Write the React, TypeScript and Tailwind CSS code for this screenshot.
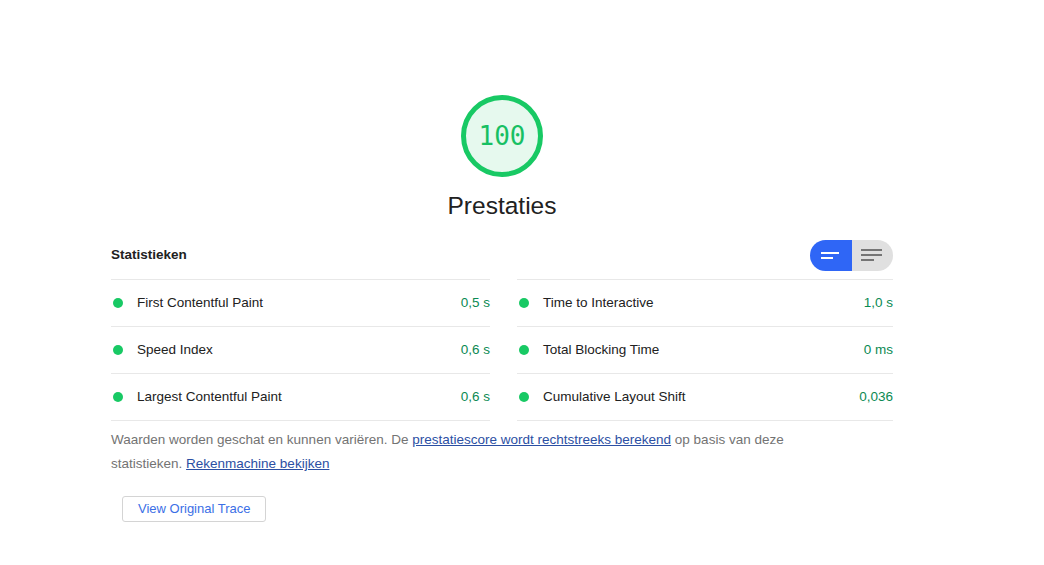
import React from 'react';

type Metric = { label: string; value: string };

const leftMetrics: Metric[] = [
  { label: 'First Contentful Paint', value: '0,5 s' },
  { label: 'Speed Index', value: '0,6 s' },
  { label: 'Largest Contentful Paint', value: '0,6 s' },
];

const rightMetrics: Metric[] = [
  { label: 'Time to Interactive', value: '1,0 s' },
  { label: 'Total Blocking Time', value: '0 ms' },
  { label: 'Cumulative Layout Shift', value: '0,036' },
];

function Gauge() {
  return (
    <div className="relative w-[82px] h-[82px]">
      <svg width="82" height="82" viewBox="0 0 82 82" className="absolute inset-0">
        <circle cx="41" cy="41" r="38.5" fill="#e6f9ee" stroke="#18c964" strokeWidth="5" />
      </svg>
      <div className="absolute inset-0 flex items-center justify-center font-['DejaVu_Sans_Mono',monospace] text-[26px] text-[#17c063]">
        100
      </div>
    </div>
  );
}

function ViewToggle() {
  return (
    <div className="flex h-[31px] w-[83px]">
      <button className="flex-1 flex items-center justify-center rounded-l-full bg-[#2f66f6]">
        <svg width="20" height="8" viewBox="0 0 20 8">
          <rect x="0" y="0" width="18" height="2" fill="#ffffff" />
          <rect x="0" y="5" width="12" height="2" fill="#ffffff" />
        </svg>
      </button>
      <button className="flex-1 flex items-center justify-center rounded-r-full bg-[#e0e0e0]">
        <svg width="22" height="13" viewBox="0 0 22 13">
          <rect x="0" y="0" width="21" height="2" fill="#757575" />
          <rect x="0" y="5" width="21" height="2" fill="#757575" />
          <rect x="0" y="10" width="13" height="2" fill="#757575" />
        </svg>
      </button>
    </div>
  );
}

function MetricColumn({ metrics }: { metrics: Metric[] }) {
  return (
    <div className="border-t border-[#e8e8e8]">
      {metrics.map(m => (
        <div key={m.label} className="flex items-center h-[47px] border-b border-[#e8e8e8]">
          <span className="ml-[2px] w-[10px] h-[10px] rounded-full bg-[#18c964]" />
          <span className="ml-[14px] flex-1 text-[13.5px] text-[#212121]">{m.label}</span>
          <span className="text-[13.5px] text-[#0b8a53]">{m.value}</span>
        </div>
      ))}
    </div>
  );
}

export default function App() {
  return (
    <div className="min-h-screen bg-white font-['Liberation_Sans',Arial,sans-serif] pt-[95px] pl-[111px]">
      <div className="w-[782px]">
        <div className="flex flex-col items-center">
          <Gauge />
          <h1 className="mt-[13px] text-[24.5px] leading-[32px] text-[#212121]">Prestaties</h1>
        </div>

        <div className="mt-[18px] flex items-center justify-between">
          <span className="text-[13.5px] font-bold text-[#212121]">Statistieken</span>
          <ViewToggle />
        </div>

        <div className="mt-[8px] grid grid-cols-[379px_376px] gap-x-[27px]">
          <MetricColumn metrics={leftMetrics} />
          <MetricColumn metrics={rightMetrics} />
        </div>

        <p className="mt-[7px] max-w-[720px] text-[13.5px] leading-[24px] text-[#737373]">
          Waarden worden geschat en kunnen variëren. De{' '}
          <a href="#" className="underline text-[#2b4fa3]">prestatiescore wordt rechtstreeks berekend</a>{' '}
          op basis van deze statistieken.{' '}
          <a href="#" className="underline text-[#2b4fa3]">Rekenmachine bekijken</a>
        </p>

        <button className="mt-[20px] ml-[11px] h-[26px] px-[15px] rounded-[3px] border border-[#d4d4d4] bg-white text-[13px] text-[#3b6fe6]">
          View Original Trace
        </button>
      </div>
    </div>
  );
}
